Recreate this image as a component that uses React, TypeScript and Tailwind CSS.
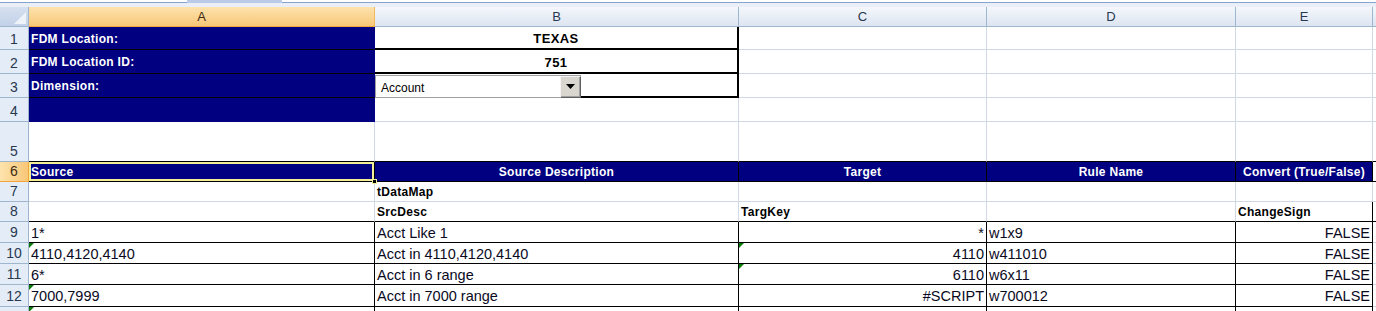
import React from 'react';

type Line = 'g' | 'k' | 'k2' | 'n' | 'nv';
type Cell = {
  text?: string;
  align?: 'l' | 'c' | 'r';
  kind?: 'navy' | 'bold' | 'big' | 'data' | 'plain';
  b?: Line;
  r?: Line;
  tri?: boolean;
  combo?: boolean;
  selected?: boolean;
};

const COLS = [346, 364, 248, 249, 137, 40];
const LETTERS = ['A', 'B', 'C', 'D', 'E', ''];

const bottomClass: Record<Line, string> = {
  g: 'border-b border-b-[#d0d7e5]',
  k: 'border-b border-b-black',
  k2: 'border-b-2 border-b-black',
  n: 'border-b-0',
  nv: 'border-b border-b-[#000080]',
};
const rightClass: Record<Line, string> = {
  g: 'border-r border-r-[#d0d7e5]',
  k: 'border-r border-r-black',
  k2: 'border-r-2 border-r-black',
  n: 'border-r-0',
  nv: 'border-r border-r-[#000080]',
};
const alignClass = { l: 'justify-start', c: 'justify-center', r: 'justify-end' };
const kindClass = {
  navy: 'bg-[#000080] text-white font-bold text-[12px] tracking-[0.3px]',
  bold: 'text-black font-bold text-[12px] tracking-[0.3px]',
  big: 'text-black font-bold text-[13px] tracking-[0.4px]',
  data: 'text-[#0a0a1e] text-[14.5px]',
  plain: 'text-black text-[12px]',
};

const blank = (b: Line = 'g', r: Line = 'g'): Cell => ({ b, r });

const rows: { h: number; cells: Cell[] }[] = [
  {
    h: 23,
    cells: [
      { text: 'FDM Location:', kind: 'navy', b: 'k', r: 'nv' },
      { text: 'TEXAS', kind: 'big', align: 'c', b: 'k2', r: 'k2' },
      blank(), blank(), blank(), blank(),
    ],
  },
  {
    h: 24,
    cells: [
      { text: 'FDM Location ID:', kind: 'navy', b: 'k', r: 'nv' },
      { text: '751', kind: 'big', align: 'c', b: 'k2', r: 'k2' },
      blank(), blank(), blank(), blank(),
    ],
  },
  {
    h: 24,
    cells: [
      { text: 'Dimension:', kind: 'navy', b: 'k', r: 'nv' },
      { combo: true, b: 'k2', r: 'k2' },
      blank(), blank(), blank(), blank(),
    ],
  },
  {
    h: 24,
    cells: [{ kind: 'navy', b: 'nv', r: 'nv' }, blank(), blank(), blank(), blank(), blank()],
  },
  {
    h: 40,
    cells: [blank('k'), blank('k'), blank('k'), blank('k'), blank('k'), blank('k')],
  },
  {
    h: 20,
    cells: [
      { text: 'Source', kind: 'navy', b: 'k', r: 'k', selected: true },
      { text: 'Source Description', kind: 'navy', align: 'c', b: 'k', r: 'k' },
      { text: 'Target', kind: 'navy', align: 'c', b: 'k', r: 'k' },
      { text: 'Rule Name', kind: 'navy', align: 'c', b: 'k', r: 'k' },
      { text: 'Convert (True/False)', kind: 'navy', align: 'c', b: 'k', r: 'k' },
      blank('k'),
    ],
  },
  {
    h: 20,
    cells: [blank(), { text: 'tDataMap', kind: 'bold' }, blank(), blank(), blank(), blank()],
  },
  {
    h: 20,
    cells: [
      blank('k'),
      { text: 'SrcDesc', kind: 'bold', b: 'k' },
      { text: 'TargKey', kind: 'bold', b: 'k' },
      blank('k'),
      { text: 'ChangeSign', kind: 'bold', b: 'k', r: 'k' },
      blank('k'),
    ],
  },
  ...[
    ['1*', 'Acct Like 1', '*', 'w1x9', false, false],
    ['4110,4120,4140', 'Acct in 4110,4120,4140', '4110', 'w411010', true, true],
    ['6*', 'Acct in 6 range', '6110', 'w6x11', false, true],
    ['7000,7999', 'Acct in 7000 range', '#SCRIPT', 'w700012', true, false],
  ].map(([a, b, c, d, ta, tc], i) => ({
    h: i === 3 ? 22 : 21,
    cells: [
      { text: a as string, kind: 'data' as const, b: 'k' as Line, r: 'k' as Line, tri: ta as boolean },
      { text: b as string, kind: 'data' as const, b: 'k' as Line, r: 'k' as Line },
      { text: c as string, kind: 'data' as const, align: 'r' as const, b: 'k' as Line, r: 'k' as Line, tri: tc as boolean },
      { text: d as string, kind: 'data' as const, b: 'k' as Line, r: 'k' as Line },
      { text: 'FALSE', kind: 'data' as const, align: 'r' as const, b: 'k' as Line, r: 'k' as Line },
      blank(),
    ],
  })),
  {
    h: 20,
    cells: [
      { kind: 'data', b: 'k', r: 'k', tri: true },
      { b: 'k', r: 'k' },
      { b: 'k', r: 'k' },
      { b: 'k', r: 'k' },
      { b: 'k', r: 'k' },
      blank(),
    ],
  },
];

function Combo() {
  return (
    <div className="mt-[1px] flex h-[23px] w-[206px] items-center border border-[#a0a0a0] border-r-0 bg-white">
      <span className="flex-1 pl-[5px] pt-[3px] text-[12px] text-black">Account</span>
      <div className="flex h-[22px] w-[21px] items-center justify-center border border-t-[#f4f4f4] border-l-[#f4f4f4] border-b-[#606060] border-r-[#606060] bg-[#d8d6cf] shadow-[inset_-1px_-1px_0_#a0a0a0]">
        <svg width="9" height="5" viewBox="0 0 9 5">
          <path d="M0 0h9L4.5 5z" fill="#000" />
        </svg>
      </div>
    </div>
  );
}

function GridCell({ cell, width }: { cell: Cell; width: number }) {
  const kind = cell.kind ?? 'plain';
  return (
    <div
      style={{ width }}
      className={`relative box-border flex shrink-0 overflow-visible whitespace-nowrap leading-[15px] ${
        alignClass[cell.align ?? 'l']
      } ${kindClass[kind]} ${bottomClass[cell.b ?? 'g']} ${rightClass[cell.r ?? 'g']} ${
        cell.combo ? 'items-start px-0' : 'items-center px-[2px] pt-[2px]'
      }`}
    >
      {cell.combo ? <Combo /> : cell.text}
      {cell.tri ? (
        <span className="absolute left-0 top-0 h-0 w-0 border-r-[5px] border-t-[5px] border-r-transparent border-t-[#0a7a0a]" />
      ) : null}
      {cell.selected ? (
        <>
          <span className="pointer-events-none absolute inset-[0px] border-2 border-[#f2ee9a]" />
          <span className="absolute bottom-[-3px] right-[-3px] z-10 h-[5px] w-[5px] border border-[#f2ee9a] bg-black" />
        </>
      ) : null}
    </div>
  );
}

export default function App() {
  return (
    <div className="h-[311px] w-[1376px] overflow-hidden bg-white font-['Liberation_Sans',Arial,sans-serif]">
      {/* ribbon edge / scroll strip */}
      <div className="relative h-[7px] w-full">
        <div className="h-[2px] bg-white" />
        <div className="h-[1px] bg-[#86a3cf]" />
        <div className="h-[4px] bg-[#eaeff7]" />
        <div className="absolute left-[187px] top-0 h-[3px] w-[95px] bg-[#b9cbe6]" />
      </div>

      {/* column headers */}
      <div className="flex h-[20px]">
        <div className="relative box-border flex h-full w-[29px] shrink-0 border-b border-r border-[#9eb6ce] bg-[linear-gradient(#d6e0f0,#c2d1e8)]">
          <svg className="absolute bottom-[2px] right-[2px]" width="12" height="12" viewBox="0 0 12 12">
            <path d="M12 0V12H0z" fill="#eef2f9" />
          </svg>
        </div>
        {COLS.map((w, i) => (
          <div
            key={i}
            style={{ width: w }}
            className={`box-border flex h-full shrink-0 items-center justify-center border-b border-r text-[13px] ${
              i === 0
                ? 'border-b-[#f2a53b] border-r-[#f2b85e] bg-[linear-gradient(#fde3ad,#f8c778)] text-[#3b2a10]'
                : 'border-b-[#9eb6ce] border-r-[#9eb6ce] bg-[linear-gradient(#f4f7fc,#dde5f1)] text-[#27384f]'
            }`}
          >
            {LETTERS[i]}
          </div>
        ))}
      </div>

      {rows.map((row, ri) => (
        <div key={ri} className="flex" style={{ height: row.h }}>
          <div
            className={`box-border flex w-[29px] shrink-0 items-end justify-center border-b border-r pb-[2px] text-[14px] leading-[16px] ${
              ri === 5
                ? 'border-b-[#f2a53b] border-r-[#f2a53b] bg-[linear-gradient(90deg,#fde3ad,#f8c778)] text-[#3b2a10]'
                : 'border-b-[#9eb6ce] border-r-[#9eb6ce] bg-[#e4ecf7] text-[#27384f]'
            }`}
          >
            {ri < 12 ? ri + 1 : ''}
          </div>
          {row.cells.map((cell, ci) => (
            <GridCell key={ci} cell={cell} width={COLS[ci]} />
          ))}
        </div>
      ))}
    </div>
  );
}
